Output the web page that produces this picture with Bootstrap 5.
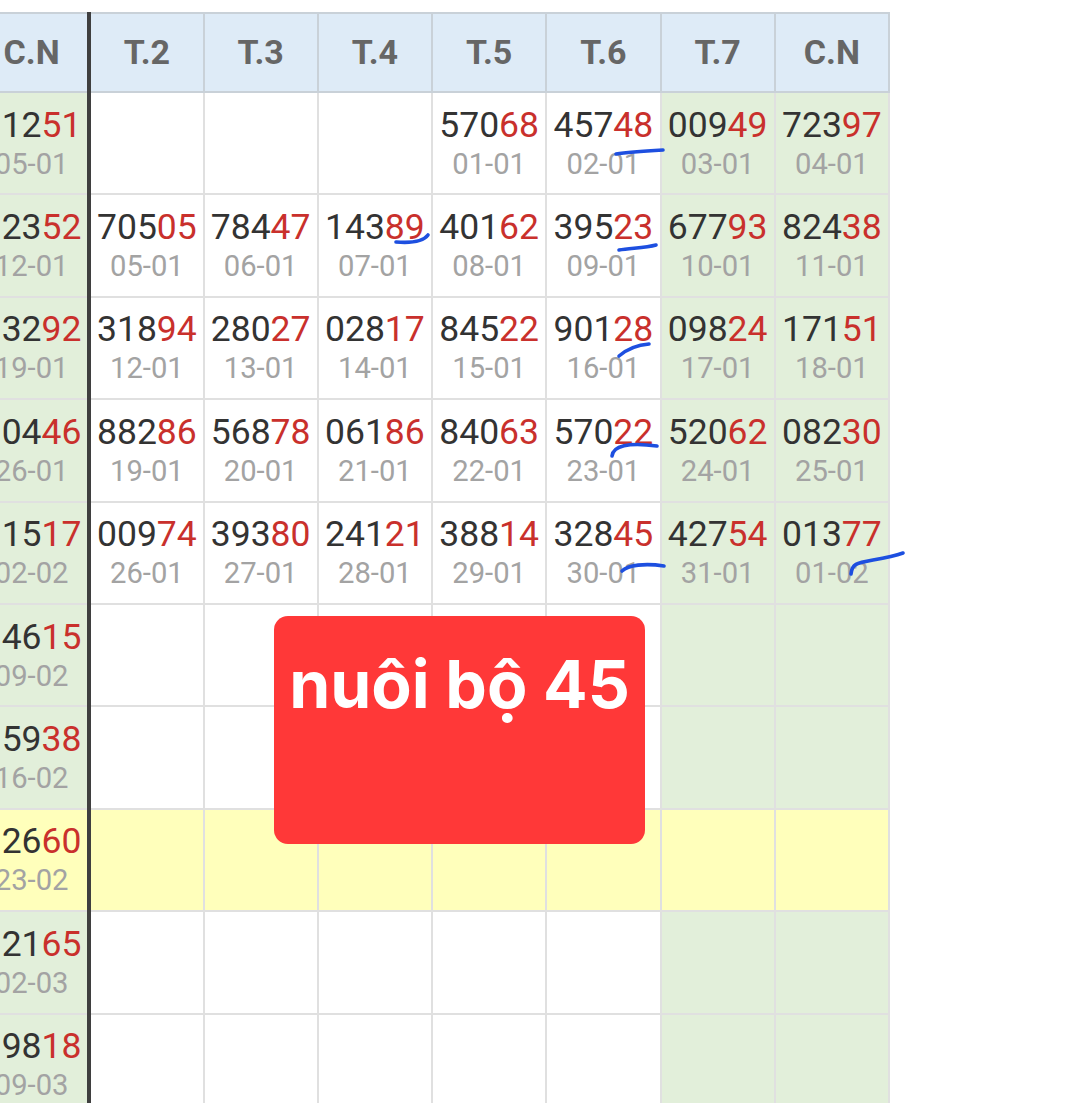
<!DOCTYPE html>
<html lang="vi">
<head>
<meta charset="utf-8">
<title>Bảng kết quả</title>
<link href="https://cdn.jsdelivr.net/npm/bootstrap@5.3.0/dist/css/bootstrap.min.css" rel="stylesheet">
<style>
html, body { height: 1103px; overflow: hidden; background: #fff; }
.sheet-wrap { position: relative; height: 1103px; overflow: hidden; padding-top: 12px; }
.sheet { table-layout: fixed; width: 916px; margin: 0 0 0 -26px; border-collapse: collapse; font-family: Roboto, "Liberation Sans", sans-serif; }
.sheet th, .sheet td { border: 2px solid #e0e0e0; padding: 0; text-align: center; vertical-align: middle; }
.sheet th { height: 79px; background: #deebf7; color: #666; font-size: 34px; font-weight: 700; border-color: #c9d1d8; }
.sheet td { height: 102.4px; }
.sheet .end { border-right: 4px solid #3f3f3f; }
.sheet .wk { background: #e2efda; }
.sheet .hl { background: #ffffbb; }
.num { display: block; font-size: 35.5px; line-height: 40px; color: #333; }
.num b { font-weight: 400; color: #c9302c; }
.dat { display: block; font-size: 29.2px; line-height: 36px; margin-top: 1px; color: #a3a3a3; }
.hid { display: inline-block; width: .5615em; }
.note { position: absolute; left: 274px; top: 616px; width: 371px; height: 228px; background: #ff3838; color: #fff; border-radius: 14px; font-family: Inter, "Liberation Sans", sans-serif; font-size: 66px; font-weight: 700; line-height: 1; text-align: center; padding-top: 35px; white-space: nowrap; }
.ink { position: absolute; left: 0; top: 0; pointer-events: none; }
.ink path { fill: none; stroke: #1d4fe0; stroke-width: 3.6; stroke-linecap: round; stroke-linejoin: round; }
</style>
</head>
<body>
<div class="sheet-wrap">
<table class="sheet">
<thead>
<tr><th class="end">C.N</th><th>T.2</th><th>T.3</th><th>T.4</th><th>T.5</th><th>T.6</th><th>T.7</th><th>C.N</th></tr>
</thead>
<tbody>
<tr>
<td class="wk end"><span class="num"><span class="hid"></span>12<b>51</b></span><span class="dat">05-01</span></td>
<td></td><td></td><td></td>
<td><span class="num">570<b>68</b></span><span class="dat">01-01</span></td>
<td><span class="num">457<b>48</b></span><span class="dat">02-01</span></td>
<td class="wk"><span class="num">009<b>49</b></span><span class="dat">03-01</span></td>
<td class="wk"><span class="num">723<b>97</b></span><span class="dat">04-01</span></td>
</tr>
<tr>
<td class="wk end"><span class="num"><span class="hid"></span>23<b>52</b></span><span class="dat">12-01</span></td>
<td><span class="num">705<b>05</b></span><span class="dat">05-01</span></td>
<td><span class="num">784<b>47</b></span><span class="dat">06-01</span></td>
<td><span class="num">143<b>89</b></span><span class="dat">07-01</span></td>
<td><span class="num">401<b>62</b></span><span class="dat">08-01</span></td>
<td><span class="num">395<b>23</b></span><span class="dat">09-01</span></td>
<td class="wk"><span class="num">677<b>93</b></span><span class="dat">10-01</span></td>
<td class="wk"><span class="num">824<b>38</b></span><span class="dat">11-01</span></td>
</tr>
<tr>
<td class="wk end"><span class="num"><span class="hid"></span>32<b>92</b></span><span class="dat">19-01</span></td>
<td><span class="num">318<b>94</b></span><span class="dat">12-01</span></td>
<td><span class="num">280<b>27</b></span><span class="dat">13-01</span></td>
<td><span class="num">028<b>17</b></span><span class="dat">14-01</span></td>
<td><span class="num">845<b>22</b></span><span class="dat">15-01</span></td>
<td><span class="num">901<b>28</b></span><span class="dat">16-01</span></td>
<td class="wk"><span class="num">098<b>24</b></span><span class="dat">17-01</span></td>
<td class="wk"><span class="num">171<b>51</b></span><span class="dat">18-01</span></td>
</tr>
<tr>
<td class="wk end"><span class="num"><span class="hid"></span>04<b>46</b></span><span class="dat">26-01</span></td>
<td><span class="num">882<b>86</b></span><span class="dat">19-01</span></td>
<td><span class="num">568<b>78</b></span><span class="dat">20-01</span></td>
<td><span class="num">061<b>86</b></span><span class="dat">21-01</span></td>
<td><span class="num">840<b>63</b></span><span class="dat">22-01</span></td>
<td><span class="num">570<b>22</b></span><span class="dat">23-01</span></td>
<td class="wk"><span class="num">520<b>62</b></span><span class="dat">24-01</span></td>
<td class="wk"><span class="num">082<b>30</b></span><span class="dat">25-01</span></td>
</tr>
<tr>
<td class="wk end"><span class="num"><span class="hid"></span>15<b>17</b></span><span class="dat">02-02</span></td>
<td><span class="num">009<b>74</b></span><span class="dat">26-01</span></td>
<td><span class="num">393<b>80</b></span><span class="dat">27-01</span></td>
<td><span class="num">241<b>21</b></span><span class="dat">28-01</span></td>
<td><span class="num">388<b>14</b></span><span class="dat">29-01</span></td>
<td><span class="num">328<b>45</b></span><span class="dat">30-01</span></td>
<td class="wk"><span class="num">427<b>54</b></span><span class="dat">31-01</span></td>
<td class="wk"><span class="num">013<b>77</b></span><span class="dat">01-02</span></td>
</tr>
<tr>
<td class="wk end"><span class="num"><span class="hid"></span>46<b>15</b></span><span class="dat">09-02</span></td>
<td></td><td></td><td></td><td></td><td></td><td class="wk"></td><td class="wk"></td>
</tr>
<tr>
<td class="wk end"><span class="num"><span class="hid"></span>59<b>38</b></span><span class="dat">16-02</span></td>
<td></td><td></td><td></td><td></td><td></td><td class="wk"></td><td class="wk"></td>
</tr>
<tr>
<td class="hl end"><span class="num"><span class="hid"></span>26<b>60</b></span><span class="dat">23-02</span></td>
<td class="hl"></td><td class="hl"></td><td class="hl"></td><td class="hl"></td><td class="hl"></td><td class="hl"></td><td class="hl"></td>
</tr>
<tr>
<td class="wk end"><span class="num"><span class="hid"></span>21<b>65</b></span><span class="dat">02-03</span></td>
<td></td><td></td><td></td><td></td><td></td><td class="wk"></td><td class="wk"></td>
</tr>
<tr>
<td class="wk end"><span class="num"><span class="hid"></span>98<b>18</b></span><span class="dat">09-03</span></td>
<td></td><td></td><td></td><td></td><td></td><td class="wk"></td><td class="wk"></td>
</tr>
</tbody>
</table>
<svg class="ink" width="1080" height="1103" viewBox="0 0 1080 1103" aria-hidden="true">
<path d="M616 154 C628 152 645 151 663 150"/>
<path d="M396 242 C408 243 422 243 428 235"/>
<path d="M619 250 C630 248 645 248 656 245"/>
<path d="M619 356 C626 350 636 345 649 344"/>
<path d="M612 456 C613 446 628 442 657 446"/>
<path d="M622 571 C628 565 645 563 664 566"/>
<path d="M851 574 C852 564 856 563 873 560 C885 558 895 556 903 553"/>
</svg>
<div class="note">nuôi bộ 45</div>
</div>
<script src="https://cdn.jsdelivr.net/npm/bootstrap@5.3.0/dist/js/bootstrap.bundle.min.js"></script>
</body>
</html>
